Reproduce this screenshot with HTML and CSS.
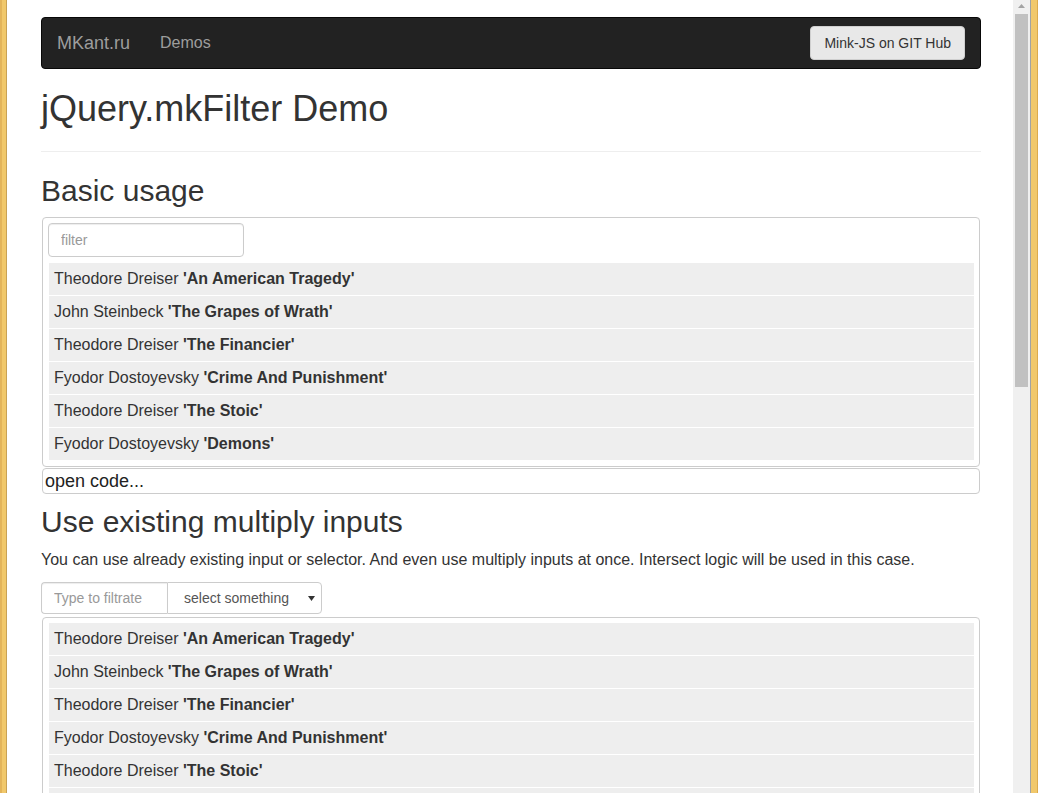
FILE: index.html
```html
<!DOCTYPE html>
<html lang="en">
<head>
<meta charset="utf-8">
<title>jQuery.mkFilter Demo</title>
<link rel="stylesheet" href="styles.css">
</head>
<body>
<div class="window">
  <div class="frame-left"></div>
  <div class="viewport">
    <div class="container">
      <nav class="navbar">
        <a class="brand" href="#">MKant.ru</a>
        <a class="nav-link" href="#">Demos</a>
        <button class="btn" type="button">Mink-JS on GIT Hub</button>
      </nav>
      <div class="page-header"><h1>jQuery.mkFilter Demo</h1></div>

      <h2 class="h2-first">Basic usage</h2>
      <div class="filter-box">
        <input class="filter-input" type="text" placeholder="filter">
        <ul class="items">
          <li class="item">Theodore Dreiser <b>'An American Tragedy'</b></li>
          <li class="item">John Steinbeck <b>'The Grapes of Wrath'</b></li>
          <li class="item">Theodore Dreiser <b>'The Financier'</b></li>
          <li class="item">Fyodor Dostoyevsky <b>'Crime And Punishment'</b></li>
          <li class="item">Theodore Dreiser <b>'The Stoic'</b></li>
          <li class="item">Fyodor Dostoyevsky <b>'Demons'</b></li>
        </ul>
      </div>
      <div class="code-toggle">open code...</div>

      <h2 class="h2-second">Use existing multiply inputs</h2>
      <p class="lead-text">You can use already existing input or selector. And even use multiply inputs at once. Intersect logic will be used in this case.</p>
      <div class="input-group">
        <input class="ig-input" type="text" placeholder="Type to filtrate">
        <div class="select-wrap">
          <select class="ig-select"><option>select something</option></select>
          <svg class="select-arrow" width="7" height="5" viewBox="0 0 7 5"><path d="M0 0H7L3.5 5Z" fill="#333"/></svg>
        </div>
      </div>
      <div class="filter-box box-second">
        <ul class="items">
          <li class="item">Theodore Dreiser <b>'An American Tragedy'</b></li>
          <li class="item">John Steinbeck <b>'The Grapes of Wrath'</b></li>
          <li class="item">Theodore Dreiser <b>'The Financier'</b></li>
          <li class="item">Fyodor Dostoyevsky <b>'Crime And Punishment'</b></li>
          <li class="item">Theodore Dreiser <b>'The Stoic'</b></li>
          <li class="item">Fyodor Dostoyevsky <b>'Demons'</b></li>
        </ul>
      </div>
    </div>
  </div>
  <div class="scrollbar">
    <div class="arrow-up"><svg width="7" height="4" viewBox="0 0 7 4"><path d="M3.5 0L7 4H0Z" fill="#a3a3a3"/></svg></div>
    <div class="thumb"></div>
  </div>
  <div class="frame-right"></div>
</div>
</body>
</html>
```
FILE: styles.css
```css
html, body {
  margin: 0;
  height: 100%;
  overflow: hidden;
}
body {
  font-family: "Liberation Sans", Arial, sans-serif;
  font-size: 16px;
  color: #333;
  background: #fff;
}
.window {
  display: flex;
  height: 793px;
}
.frame-left {
  flex: none;
  width: 7px;
  background: linear-gradient(to right, #e3b45a 0 2px, #f1c86b 2px 6px, #c9a255 6px 7px);
}
.frame-right {
  flex: none;
  width: 8px;
  background: linear-gradient(to right, #a2a2a2 0 1px, #f1c86b 1px 7px, #dcaa4c 7px 8px);
}
.scrollbar {
  flex: none;
  width: 17px;
  background: #f0f0f0;
  display: flex;
  flex-direction: column;
  align-items: center;
}
.arrow-up {
  height: 14px;
  width: 100%;
  box-sizing: border-box;
  padding-top: 4px;
  display: flex;
  justify-content: center;
}
.arrow-up svg { display: block; }
.thumb {
  width: 13px;
  height: 373px;
  background: #c1c1c1;
}
.viewport {
  flex: 1;
  overflow: hidden;
  padding: 17px 0 0 34px;
}
.container {
  width: 940px;
}
.navbar {
  display: flex;
  align-items: flex-start;
  height: 50px;
  padding: 0 15px;
  background: #222;
  border: 1px solid #080808;
  border-radius: 4px;
  margin-bottom: 20px;
}
.brand {
  font-size: 18px;
  line-height: 20px;
  padding: 15px 0;
  margin-right: 30px;
  color: #9d9d9d;
  text-decoration: none;
}
.nav-link {
  font-size: 16px;
  line-height: 20px;
  padding: 15px 0;
  color: #9d9d9d;
  text-decoration: none;
}
.btn {
  margin-left: auto;
  margin-top: 8px;
  font-family: inherit;
  font-size: 14px;
  line-height: 20px;
  padding: 6px 13px;
  color: #333;
  background: #e8e8e8;
  border: 1px solid #cfcfcf;
  border-radius: 4px;
}
.page-header {
  padding-bottom: 22px;
  border-bottom: 1px solid #eee;
}
h1 {
  margin: 0;
  font-size: 36px;
  line-height: 40px;
  font-weight: normal;
}
h2 {
  font-size: 30px;
  line-height: 33px;
  font-weight: normal;
}
.h2-first { margin: 22px 0 10px; }
.h2-second { margin: 11px 0 10px; }
.filter-box {
  margin: 0 1px;
  padding: 5px;
  border: 1px solid #ccc;
  border-radius: 4px;
}
.filter-input {
  display: block;
  box-sizing: border-box;
  width: 196px;
  height: 34px;
  margin: 0 0 6px;
  padding: 6px 12px;
  font-family: inherit;
  font-size: 14px;
  color: #555;
  border: 1px solid #ccc;
  border-radius: 4px;
  box-shadow: inset 0 1px 1px rgba(0,0,0,.075);
}
input::placeholder { color: #999; }
.items {
  list-style: none;
  margin: 0;
  padding: 0;
}
.item {
  margin: 0 0 1px 1px;
  padding: 5px;
  line-height: 22px;
  background: #eee;
}
.code-toggle {
  margin: 1px 1px 0;
  padding: 2px;
  font-size: 18px;
  line-height: 20px;
  color: #222;
  border: 1px solid #ccc;
  border-radius: 4px;
}
.lead-text {
  margin: 0 0 11px;
  line-height: 23px;
}
.input-group {
  display: flex;
  height: 32px;
}
.ig-input {
  box-sizing: border-box;
  width: 126px;
  height: 32px;
  padding: 6px 12px;
  font-family: inherit;
  font-size: 14px;
  color: #555;
  border: 1px solid #ccc;
  border-right: 0;
  border-radius: 4px 0 0 4px;
  box-shadow: inset 0 1px 1px rgba(0,0,0,.075);
}
.select-wrap {
  position: relative;
  width: 155px;
}
.ig-select {
  appearance: none;
  -webkit-appearance: none;
  box-sizing: border-box;
  width: 100%;
  height: 32px;
  padding: 0 16px;
  font-family: inherit;
  font-size: 14px;
  color: #555;
  background: #fff;
  border: 1px solid #ccc;
  border-radius: 0 4px 4px 0;
}
.select-arrow {
  position: absolute;
  right: 7px;
  top: 14px;
}
.box-second { margin-top: 3px; }
```
